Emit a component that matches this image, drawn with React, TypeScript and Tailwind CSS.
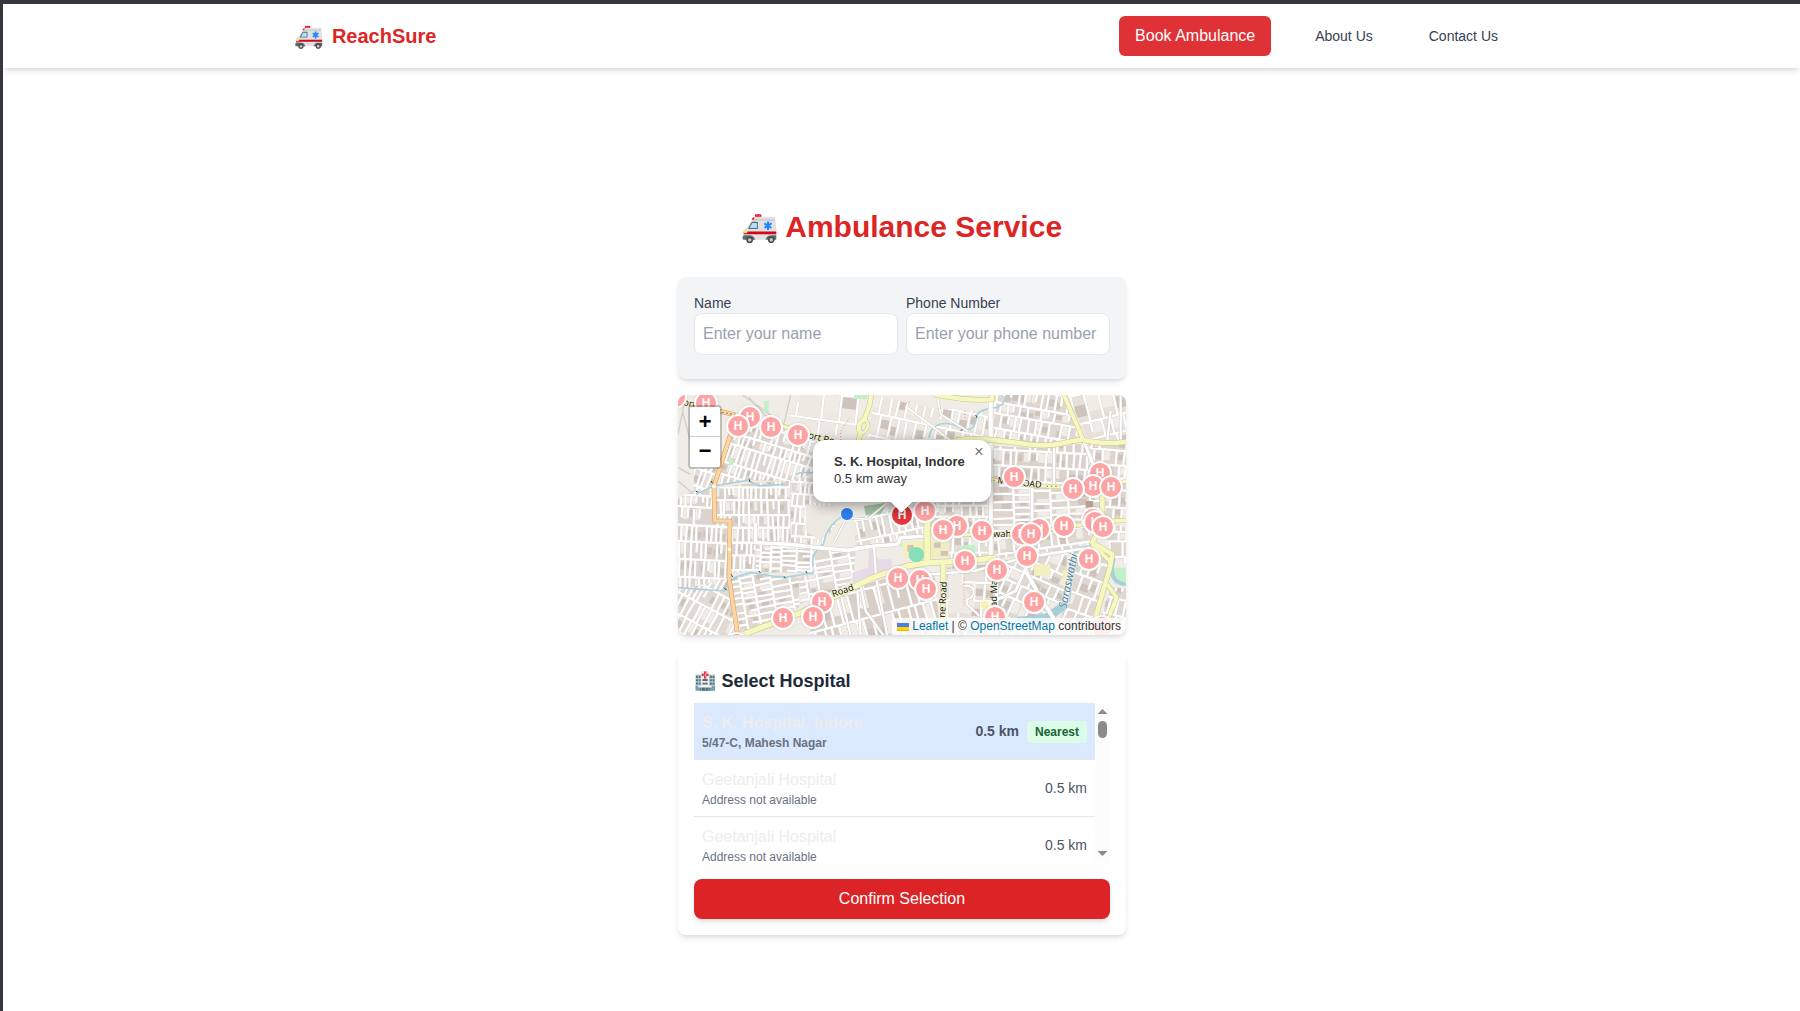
import React from "react";

type Point = [number, number];

const EMOJI = "font-['Noto_Color_Emoji']";

/* ---------- street generator for the map tiles ---------- */

function makeRandom(seed: number) {
  let s = seed;
  return () => {
    s = (s * 1664525 + 1013904223) % 4294967296;
    return s / 4294967296;
  };
}

interface Patch {
  poly: string;
  cx: number;
  cy: number;
  size: number;
  angle: number;
  gap: number;
  strip: number;
  fill: string;
}

const patches: Patch[] = [
  { poly: "12,320 120,270 120,395 168,398 165,560 12,600", cx: 90, cy: 430, size: 210, angle: 3, gap: 15, strip: 48, fill: "#ddd5cd" },
  { poly: "12,600 165,560 190,735 12,735", cx: 95, cy: 650, size: 150, angle: 28, gap: 17, strip: 45, fill: "#e2dbd3" },
  { poly: "170,100 330,110 420,140 420,250 350,270 225,268 125,285", cx: 280, cy: 190, size: 220, angle: 17, gap: 15, strip: 44, fill: "#ddd6ce" },
  { poly: "60,190 48,230 130,230 110,290 60,310", cx: 90, cy: 250, size: 80, angle: 20, gap: 16, strip: 40, fill: "#e5dfd8" },
  { poly: "125,290 240,275 350,270 350,455 245,455 245,540 168,545 168,390 122,390", cx: 240, cy: 400, size: 200, angle: 0, gap: 14, strip: 50, fill: "#dad1c9" },
  { poly: "350,270 420,245 420,335 480,335 490,390 440,470 350,455", cx: 420, cy: 360, size: 130, angle: 4, gap: 15, strip: 44, fill: "#e0d9d2" },
  { poly: "245,455 430,465 415,545 245,545", cx: 330, cy: 500, size: 130, angle: 92, gap: 15, strip: 44, fill: "#dcd3cb" },
  { poly: "168,560 260,545 375,560 375,650 200,725", cx: 270, cy: 640, size: 150, angle: 80, gap: 16, strip: 54, fill: "#e0d7ce" },
  { poly: "420,470 545,475 540,560 500,590 380,640 375,560 415,545", cx: 460, cy: 550, size: 130, angle: 80, gap: 18, strip: 48, fill: "#e1dad2" },
  { poly: "470,610 640,560 780,540 800,735 400,735", cx: 600, cy: 650, size: 230, angle: -15, gap: 24, strip: 80, fill: "#dacfc7" },
  { poly: "540,385 760,330 760,435 545,470", cx: 650, cy: 400, size: 140, angle: -12, gap: 20, strip: 48, fill: "#e5ded7" },
  { poly: "385,12 580,12 550,110 450,145 330,100", cx: 470, cy: 80, size: 150, angle: 8, gap: 60, strip: 110, fill: "#eeeae3" },
  { poly: "600,12 770,50 950,60 950,145 580,145 590,95", cx: 750, cy: 90, size: 210, angle: 12, gap: 26, strip: 55, fill: "#ece7df" },
  { poly: "960,12 1170,12 1225,150 1130,165 960,140", cx: 1080, cy: 80, size: 160, angle: 10, gap: 19, strip: 46, fill: "#e0d8d0" },
  { poly: "1180,12 1356,12 1356,150 1240,145", cx: 1270, cy: 80, size: 140, angle: -14, gap: 36, strip: 72, fill: "#e7e1da" },
  { poly: "955,165 1130,170 1240,155 1280,260 1190,290 955,265", cx: 1100, cy: 220, size: 190, angle: 3, gap: 21, strip: 42, fill: "#dcd2ca" },
  { poly: "1240,155 1356,155 1356,390 1290,390 1280,260", cx: 1310, cy: 260, size: 160, angle: 5, gap: 23, strip: 46, fill: "#e0d6cd" },
  { poly: "955,275 1170,295 1280,310 1280,385 1150,405 955,430", cx: 1110, cy: 350, size: 190, angle: 88, gap: 20, strip: 54, fill: "#dfd5cd" },
  { poly: "770,335 955,330 955,430 770,430", cx: 860, cy: 380, size: 120, angle: 0, gap: 21, strip: 42, fill: "#dfd5cd" },
  { poly: "825,440 955,440 955,500 825,505", cx: 890, cy: 470, size: 80, angle: 0, gap: 26, strip: 46, fill: "#e5ded7" },
  { poly: "960,440 1160,420 1260,400 1250,465 960,505", cx: 1110, cy: 450, size: 160, angle: -8, gap: 22, strip: 40, fill: "#e0d9d2" },
  { poly: "970,520 1180,480 1170,640 1050,735 970,735", cx: 1080, cy: 620, size: 160, angle: 24, gap: 28, strip: 56, fill: "#dfd9d3" },
  { poly: "1190,480 1270,470 1310,520 1270,690 1160,690", cx: 1240, cy: 580, size: 130, angle: 20, gap: 26, strip: 50, fill: "#e0d8d0" },
  { poly: "1290,410 1356,400 1356,520 1310,490", cx: 1325, cy: 455, size: 80, angle: 0, gap: 20, strip: 40, fill: "#dfd5cd" },
  { poly: "1310,590 1356,590 1356,735 1260,735", cx: 1310, cy: 660, size: 100, angle: 14, gap: 22, strip: 48, fill: "#e0d8d0" },
  { poly: "820,525 960,520 955,735 810,735", cx: 890, cy: 630, size: 130, angle: 2, gap: 30, strip: 58, fill: "#e8e2da" },
];

function buildPatch(p: Patch, index: number) {
  const rnd = makeRandom(index * 7919 + 17);
  let roads = "";
  let blocks = "";
  let open = "";
  for (let y = -p.size; y < p.size; ) {
    const h = p.strip * (0.7 + rnd() * 0.6);
    roads += `M${-p.size} ${y.toFixed(1)}L${p.size} ${y.toFixed(1)}`;
    for (let x = -p.size; x < p.size; ) {
      const w = p.gap * (0.8 + rnd() * 0.5);
      const r = rnd();
      if (r > 0.08) roads += `M${x.toFixed(1)} ${y.toFixed(1)}l${(rnd() * 5 - 2.5).toFixed(1)} ${(r < 0.25 ? h * 0.6 : h).toFixed(1)}`;
      const k = rnd();
      if (k < 0.35) blocks += `M${(x + 4).toFixed(1)} ${(y + 5 + rnd() * h * 0.4).toFixed(1)}h${(w - 5).toFixed(1)}v${(h * 0.4).toFixed(1)}h${(5 - w).toFixed(1)}z`;
      else if (k < 0.6) open += `M${(x + 3).toFixed(1)} ${(y + 5).toFixed(1)}h${(w - 3).toFixed(1)}v${(h * 0.6).toFixed(1)}h${(3 - w).toFixed(1)}z`;
      x += w;
    }
    y += h;
  }
  return { roads, blocks, open };
}

const streetPatches = patches.map((p, i) => ({ ...p, ...buildPatch(p, i) }));

const yellowRoads: { d: string; w: number }[] = [
  { d: "M195 735L300 695 380 665 500 608 600 558 700 525 765 515 880 510 968 500", w: 16 },
  { d: "M325 105L400 130 475 152 540 165", w: 11 },
  { d: "M592 8C590 50 575 65 572 85C550 95 552 115 560 125L550 165", w: 13 },
  { d: "M573 85C590 100 580 120 560 130", w: 8 },
  { d: "M780 10C840 22 900 30 955 25V10", w: 13 },
  { d: "M840 150C900 135 1000 152 1080 162C1150 170 1190 145 1225 147C1270 155 1300 160 1360 152", w: 14 },
  { d: "M1168 8L1195 70 1228 147", w: 12 },
  { d: "M950 266L1060 282 1190 290 1290 285 1360 270", w: 10 },
  { d: "M760 385V515", w: 19 },
  { d: "M808 515V735", w: 14 },
  { d: "M860 430L960 430 1060 425 1180 408 1280 392 1360 388", w: 11 },
  { d: "M1285 310V390L1255 455 1315 490 1308 530 1290 590 1262 690 1240 735", w: 14 },
  { d: "M1255 460L1312 515M1300 580L1328 620 1300 690 1280 735", w: 12 },
];

const whiteRoads: { d: string; w: number }[] = [
  { d: "M950 12V500", w: 13 },
  { d: "M968 500V735", w: 10 },
  { d: "M245 395V455L350 460 430 470 520 478 600 465 670 460 680 440 760 435", w: 11 },
  { d: "M540 470L600 465 606 560 640 735", w: 7 },
  { d: "M1228 147L1255 215 1285 310", w: 10 },
  { d: "M1058 470L1055 540 1100 620 1150 700", w: 12 },
  { d: "M1060 520L1025 600 970 625", w: 9 },
  { d: "M765 550L900 540 1050 500 1250 470", w: 8 },
  { d: "M870 585C910 580 905 620 880 625C870 650 900 650 915 675", w: 6 },
  { d: "M480 455L500 415 519 380 580 385 640 335", w: 5 },
  { d: "M700 50L780 110 830 150M790 20L800 70 880 120", w: 6 },
  { d: "M1075 290V430M1140 165V290", w: 8 },
  { d: "M1310 60L1300 150M1340 12V150", w: 7 },
  { d: "M500 610L530 735M560 585L575 660 630 735M550 600L560 735", w: 7 },
];

function MapTiles() {
  return (
    <svg viewBox="12 12 1344 720" className="block h-[240px] w-[448px]" preserveAspectRatio="none" aria-hidden="true">
      <defs>
        {streetPatches.map((p, i) => (
          <clipPath key={i} id={`patch-${i}`}>
            <polygon points={p.poly} />
          </clipPath>
        ))}
      </defs>
      <rect x="0" y="0" width="1368" height="750" fill="#f0ece6" />
      <path d="M25 60L60 190M30 40L12 130M205 12L330 100L350 12M385 12L380 100M60 310L12 270M225 20L290 90M440 30L520 90M400 40L560 60M12 230L50 250" stroke="#d2cec8" strokeWidth="4" fill="none" />
      {streetPatches.map((p, i) => (
        <g key={i} clipPath={`url(#patch-${i})`}>
          <polygon points={p.poly} fill={p.fill} />
          <g transform={`translate(${p.cx} ${p.cy}) rotate(${p.angle})`}>
            <path d={p.open} fill="#f0ece6" />
            <path d={p.blocks} fill="#cfc4bb" />
            <path d={p.roads} stroke="#d0ccc9" strokeWidth="8.5" fill="none" />
            <path d={p.roads} stroke="#ffffff" strokeWidth="7" fill="none" />
          </g>
        </g>
      ))}

      {/* open ground, parks and campuses */}
      <path d="M395 340L480 345 500 370 440 450 395 420Z" fill="#eee9e1" />
      <path d="M820 535L865 530V580L905 640 885 670 830 665Z" fill="#efebe4" />
      <path d="M870 560V650M873 90V60M500 165V120L530 75M680 45L712 30" stroke="#f58c86" strokeWidth="3" strokeDasharray="3 6" fill="none" />
      <path d="M570 345L640 335 620 370 575 372Z" fill="#a3c3a5" />
      <path d="M585 475L600 478 612 505 655 505 650 535 535 575 535 545 582 530Z" fill="#e8dbe8" />
      <path d="M685 455L750 450V505L690 500Z" fill="#f6f1b8" />
      <path d="M770 448H825V500H770Z" fill="#f1ecc4" />
      <path d="M780 455h20v15h-20zM800 480h22v14h-22zM700 462h18v20h-18z" fill="#d0c3b6" />
      <path d="M862 462h42v26h-42zM1320 530h36v48h-36zM270 30h14v34h-14zM165 200h12v22h-12zM673 455h12v10h-12zM540 12h40v12h-40z" fill="#c3f0cb" />
      <path d="M1080 520h48v34h-48zM1165 540l30-14v60l-25 20z" fill="#f4efbe" />
      <rect x="1235" y="330" width="22" height="20" fill="#b89f91" />
      <circle cx="932" cy="642" r="13" fill="#f8f3b0" />

      {/* water */}
      <path d="M65 310L120 285 220 268 255 285 330 280M365 250C385 240 400 245 425 246M765 140C770 100 810 85 860 110C900 130 905 95 910 70C930 45 960 60 985 40L1000 12M512 375C480 385 455 420 448 460C420 480 412 505 418 525M12 590L80 595 150 600 180 560 230 545 330 560 420 545" stroke="#aad3df" strokeWidth="5" fill="none" strokeLinejoin="round" />
      <path d="M1185 630C1200 570 1180 500 1215 470L1255 465" stroke="#aad3df" strokeWidth="6" fill="none" />
      <path d="M1030 678L1110 670 1170 630 1180 650 1130 690 1030 695Z" fill="#a5cfdb" />
      <path d="M1318 500C1300 540 1305 580 1356 585V575C1318 570 1315 540 1325 505Z" fill="#a5cfdb" />
      <path d="M65 300l6 4M112 270l4 8M225 265l4 8M150 590l8 8M170 548l6 10M255 540l4 6M330 556l4 6M395 540l4 6M860 118l10-4M905 72l4 8" stroke="#2c3a40" strokeWidth="3" />

      {whiteRoads.map((r, i) => (
        <path key={i} d={r.d} stroke="#c9c5c0" strokeWidth={r.w + 2.5} fill="none" strokeLinejoin="round" />
      ))}
      {whiteRoads.map((r, i) => (
        <path key={i} d={r.d} stroke="#ffffff" strokeWidth={r.w} fill="none" strokeLinejoin="round" />
      ))}
      {yellowRoads.map((r, i) => (
        <path key={i} d={r.d} stroke="#c3c48c" strokeWidth={r.w + 3} fill="none" strokeLinejoin="round" />
      ))}
      {yellowRoads.map((r, i) => (
        <path key={i} d={r.d} stroke="#f6f8bf" strokeWidth={r.w} fill="none" strokeLinejoin="round" />
      ))}
      <path d="M12 32L100 52 185 72M170 130L120 285 122 390H168L165 560 192 740" stroke="#d39c5c" strokeWidth="14" fill="none" strokeLinejoin="round" />
      <path d="M12 32L100 52 185 72M170 130L120 285 122 390H168L165 560 192 740" stroke="#fcd5a2" strokeWidth="11" fill="none" strokeLinejoin="round" />
      <path d="M145 64L190 72" stroke="#92704a" strokeWidth="4" strokeDasharray="4 8" fill="none" />
      <path d="M1118 286H1155M958 268H970" stroke="#8a8a62" strokeWidth="4" strokeDasharray="4 9" fill="none" />
      <circle cx="120" cy="286" r="6" fill="#fff" />
      <circle cx="166" cy="475" r="5" fill="#fff" />

      {/* street names */}
      <g className="font-['Noto_Sans',sans-serif]" fontSize="28" fill="#14140c" stroke="#fbfbe6" strokeWidth="3" paintOrder="stroke">
        <text transform="translate(26 42) rotate(12)">ort</text>
        <text transform="translate(401 141) rotate(14)">ort Road</text>
        <text transform="translate(478 619) rotate(-20)">Road</text>
        <text transform="translate(970 277) rotate(6)" fontSize="27">M G ROAD</text>
        <text transform="translate(957 437)">wah</text>
        <text transform="translate(813 680) rotate(-87)">ne Road</text>
        <text transform="translate(968 648) rotate(-89)">ad Ma</text>
        <text transform="translate(1177 654) rotate(-78)" fontStyle="italic" fill="#4d80b3" fontSize="34">Saraswathi</text>
      </g>
      <circle cx="727" cy="491" r="23" fill="#86dfba" />
    </svg>
  );
}

/* ---------- map overlays ---------- */

const markers: Point[] = [
  [-3, 2], [28, 8], [72, 22], [60, 31], [93, 32], [120, 40], [209, 56], [336, 82], [422, 78],
  [415, 91], [433, 92], [395, 94], [247, 116], [415, 124], [417, 127], [279, 131], [386, 131],
  [425, 132], [361, 134], [265, 135], [304, 136], [344, 139], [353, 139], [349, 161], [411, 164],
  [287, 166], [319, 175], [220, 183], [242, 185], [248, 194], [144, 207], [356, 207], [317, 222],
  [135, 222], [105, 223], [424, 232], [59, 249],
];

function Marker({ at, active }: { at: Point; active?: boolean }) {
  return (
    <div
      className={
        "absolute flex size-6 -translate-x-1/2 -translate-y-1/2 items-center justify-center rounded-full border-2 border-white pb-px text-[12px] leading-none font-bold text-white " +
        (active ? "bg-[#e8383b]" : "bg-[#fda3a4] shadow-[0_0_3px_rgba(0,0,0,0.12)]")
      }
      style={{ left: at[0], top: at[1] }}
    >
      H
    </div>
  );
}

function HospitalMap() {
  return (
    <div className="relative mt-4 h-[240px] overflow-hidden rounded-lg shadow-md">
      <MapTiles />
      {markers.map((m, i) => (
        <Marker key={i} at={m} />
      ))}
      <Marker at={[224, 120]} active />
      <div className="absolute top-[112px] left-[162px] size-[14px] rounded-full border border-white bg-[#2f80ed]" />

      <div className="absolute top-[97px] left-[215px] size-[17px] rotate-45 bg-white shadow-[0_3px_14px_rgba(0,0,0,0.4)]" />
      <div className="absolute top-[45px] left-[135px] h-[62px] w-[178px] rounded-xl bg-white pt-[13px] pl-[21px] text-[13px] leading-[17px] text-[#333] shadow-[0_3px_14px_rgba(0,0,0,0.4)]">
        <div className="font-bold">S. K. Hospital, Indore</div>
        <div>0.5 km away</div>
        <span className="absolute top-0 right-0 size-6 text-center text-[16px] leading-6 text-[#757575]">×</span>
      </div>
      <div className="absolute top-[97px] left-[215px] size-[17px] rotate-45 bg-white" />

      <div className="absolute top-[10px] left-[10px] flex w-[34px] flex-col overflow-hidden rounded border-2 border-black/20 bg-clip-padding text-center font-['Liberation_Mono',monospace] text-[22px] font-bold text-black">
        <div className="h-[30px] border-b border-[#ccc] bg-white leading-[34px]">+</div>
        <div className="h-[30px] bg-white leading-[32px]">−</div>
      </div>

      <div className="absolute right-0 bottom-0 flex h-[17px] items-center bg-white/80 px-[5px] text-[12px] leading-[17px] whitespace-pre text-[#333]">
        <svg viewBox="0 0 12 8" className="mr-[3px] h-2 w-3">
          <path fill="#4C7BE1" d="M0 0h12v4H0z" />
          <path fill="#FFD500" d="M0 4h12v3H0z" />
          <path fill="#E0BC00" d="M0 7h12v1H0z" />
        </svg>
        <span className="text-[#0078a8]">Leaflet</span>
        <span> | © </span>
        <span className="text-[#0078a8]">OpenStreetMap</span>
        <span> contributors</span>
      </div>
    </div>
  );
}

/* ---------- page ---------- */

function Field({ label, placeholder }: { label: string; placeholder: string }) {
  return (
    <label className="mb-2 block w-[204px]">
      <span className="block text-sm text-[#364153]">{label}</span>
      <input
        className="block w-full rounded-lg border border-[#e5e7eb] bg-white p-2 text-base placeholder:text-[#99a1af]"
        placeholder={placeholder}
      />
    </label>
  );
}

const hospitals = [
  { name: "S. K. Hospital, Indore", address: "5/47-C, Mahesh Nagar", distance: "0.5 km", nearest: true },
  { name: "Geetanjali Hospital", address: "Address not available", distance: "0.5 km", nearest: false },
  { name: "Geetanjali Hospital", address: "Address not available", distance: "0.5 km", nearest: false },
];

function HospitalList() {
  return (
    <div className="mt-2 flex h-40">
      <ul className="h-full flex-1 overflow-hidden">
        {hospitals.map((h, i) => (
          <li
            key={i}
            className={
              "flex h-[57px] items-center justify-between border-b border-[#e5e7eb] px-2 " +
              (h.nearest ? "bg-[#dbe9fe] font-bold" : "")
            }
          >
            <div>
              <p className="text-base text-[#ededed]">{h.name}</p>
              <p className="text-xs text-[#6a7282]">{h.address}</p>
            </div>
            <div className="flex items-center gap-2">
              <span className="text-sm text-[#4a5565]">{h.distance}</span>
              {h.nearest && (
                <span className="mt-px flex h-[22px] items-center rounded bg-[#dcfce7] px-2 text-xs text-[#166534]">Nearest</span>
              )}
            </div>
          </li>
        ))}
      </ul>
      <div className="flex w-[15px] flex-col items-center bg-[#fcfcfc] pt-[6px] pb-[7px]">
        <span className="h-[5px] w-[10px] bg-[#8b8b8b] [clip-path:polygon(50%_0,100%_100%,0_100%)]" />
        <span className="mt-[7px] h-[17px] w-[9px] rounded-full bg-[#8b8b8b]" />
        <span className="mt-auto h-[5px] w-[10px] bg-[#8b8b8b] [clip-path:polygon(0_0,100%_0,50%_100%)]" />
      </div>
    </div>
  );
}

export default function App() {
  return (
    <div className="h-[1011px] w-[1800px] overflow-hidden border-t-4 border-l-[3px] border-[#38363d] bg-white font-['Liberation_Sans',Arial,sans-serif]">
      <nav className="flex h-16 items-center justify-between bg-white pr-[302px] pl-[291px] shadow-md">
        <div className="flex items-center gap-2 text-xl font-bold text-[#dc2626]">
          <span className={`${EMOJI} text-2xl font-normal`}>🚑</span>
          <span>ReachSure</span>
        </div>
        <div className="flex items-center">
          <button className="h-10 w-[152px] rounded-md bg-[#df3236] text-base text-white">Book Ambulance</button>
          <a className="ml-11 text-sm text-[#364153]">About Us</a>
          <a className="ml-14 text-sm text-[#364153]">Contact Us</a>
        </div>
      </nav>

      <main className="ml-[675px] w-[448px] pt-[141px]">
        <h1 className="flex h-9 items-center justify-center gap-[7px] pr-px text-3xl font-bold text-[#dc2626]">
          <span className={`${EMOJI} font-normal`}>🚑</span>
          <span>Ambulance Service</span>
        </h1>

        <section className="mt-8 flex h-[102px] gap-2 rounded-lg bg-[#f3f4f6] p-4 shadow-md">
          <Field label="Name" placeholder="Enter your name" />
          <Field label="Phone Number" placeholder="Enter your phone number" />
        </section>

        <HospitalMap />

        <section className="mt-4 rounded-lg bg-white p-4 shadow-md">
          <h2 className="flex h-7 items-center gap-[5px] text-lg font-bold text-[#1e2939]">
            <span className={`${EMOJI} font-normal`}>🏥</span>
            <span>Select Hospital</span>
          </h2>
          <HospitalList />
          <button className="mt-4 h-10 w-full rounded-lg bg-[#dc2426] text-base text-white shadow-md">Confirm Selection</button>
        </section>
      </main>
    </div>
  );
}
